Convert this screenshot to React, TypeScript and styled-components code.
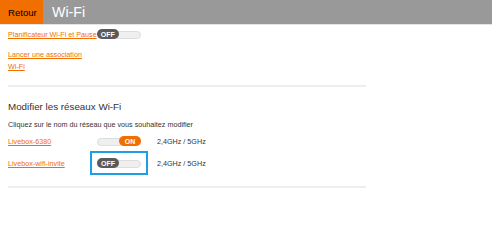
import styled, {createGlobalStyle} from "styled-components";

const GlobalStyle = createGlobalStyle`
    body {
        margin: 0;
        background: #fff;
        font-family: "Liberation Sans", Arial, sans-serif;
    }
`

const networks = [
    {name: 'Livebox-6380', on: true, focused: false},
    {name: 'Livebox-wifi-invite', on: false, focused: true},
]

export default function App() {
    return <>
        <GlobalStyle />
        <Header>
            <BackButton>Retour</BackButton>
            <Title>Wi-Fi</Title>
        </Header>
        <Content>
            <InlineRow>
                <TextLink href="#">Planificateur Wi-Fi et Pause</TextLink>
                <Toggle on={false} />
            </InlineRow>
            <WrapLink href="#">Lancer une association Wi-Fi</WrapLink>
            <Divider />
            <Heading>Modifier les réseaux Wi-Fi</Heading>
            <Hint>Cliquez sur le nom du réseau que vous souhaitez modifier</Hint>
            <NetworkList>
                {networks.map(n => <NetworkRow key={n.name}>
                    <TextLink href="#">{n.name}</TextLink>
                    <Toggle on={n.on} focused={n.focused} />
                    <Bands>2,4GHz / 5GHz</Bands>
                </NetworkRow>)}
            </NetworkList>
            <Divider />
        </Content>
    </>
}

function Toggle({on, focused = false}: {on: boolean, focused?: boolean}) {
    return <Switch $on={on} $focused={focused}>
        <Knob $on={on}>{on ? 'ON' : 'OFF'}</Knob>
    </Switch>
}

const Header = styled.header`
    display: flex;
    align-items: stretch;
    height: 24px;
    background: #999;
    border-bottom: 1px solid #e4e4e4;
`

const BackButton = styled.div`
    display: flex;
    align-items: center;
    width: 35px;
    padding-left: 8px;
    background: #f16e00;
    color: #000;
    font-size: 9.6px;
    cursor: pointer;
`

const Title = styled.h1`
    margin: 0 0 0 9px;
    align-self: center;
    color: #fff;
    font-size: 14.2px;
    font-weight: 400;
`

const Content = styled.main`
    width: 358px;
    padding: 3px 8px 0;
`

const InlineRow = styled.div`
    display: flex;
    align-items: center;
    height: 12px;
`

const TextLink = styled.a`
    color: #f16e00;
    font-size: 7.2px;
    text-decoration: underline;
    text-underline-offset: 1px;
`

const WrapLink = styled(TextLink)`
    display: block;
    width: 78px;
    margin-top: 9px;
    line-height: 12px;
`

const Divider = styled.hr`
    margin: 12px 0 0;
    border: none;
    border-top: 2px solid #eee;
`

const Heading = styled.h2`
    margin: 14px 0 0;
    color: #333;
    font-size: 9.8px;
    font-weight: 400;
    line-height: 12px;
`

const Hint = styled.p`
    margin: 7px 0 0;
    color: #333;
    font-size: 7.2px;
    line-height: 10px;
`

const NetworkList = styled.div`
    display: grid;
    grid-auto-rows: 22px;
`

const NetworkRow = styled.div`
    display: grid;
    grid-template-columns: 89px 44px auto;
    align-items: center;
`

const Bands = styled.span`
    margin-left: 16px;
    color: #333;
    font-size: 7.2px;
`

const Switch = styled.span<{ $on: boolean, $focused: boolean }>`
    position: relative;
    display: flex;
    justify-content: ${p => p.$on ? 'flex-end' : 'flex-start'};
    width: 44px;
    height: 10px;
    outline: ${p => p.$focused ? '2px solid #1e9fe3' : 'none'};
    outline-offset: 5px;

    &::before {
        content: "";
        position: absolute;
        left: 0;
        right: 0;
        top: 1.5px;
        height: 6px;
        border: 0.5px solid #ddd;
        border-radius: 4px;
        background: #efefef;
    }
`

const Knob = styled.span<{ $on: boolean }>`
    position: relative;
    display: flex;
    align-items: center;
    justify-content: center;
    width: 22px;
    height: 10px;
    border-radius: 5px;
    background: ${p => p.$on ? '#f16e00' : '#5a5a5a'};
    color: #fff;
    font-size: 7px;
    font-weight: 700;
`
